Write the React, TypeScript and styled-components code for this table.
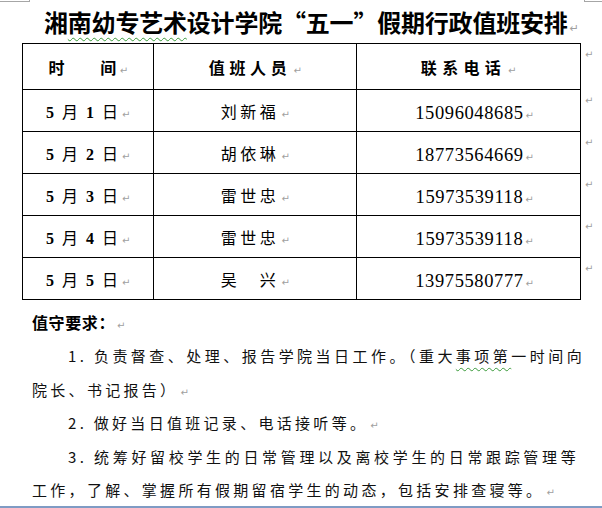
import React from 'react';
import styled, { createGlobalStyle } from 'styled-components';

const GlobalStyle = createGlobalStyle`
  html, body {
    margin: 0;
    padding: 0;
    background: #ffffff;
  }
  body {
    font-family: "Liberation Serif", "Noto Sans CJK SC", serif;
    color: #000;
  }
`;

const Page = styled.div`
  position: relative;
  width: 602px;
  height: 508px;
  box-sizing: border-box;
  border-bottom: 2px solid #7f9bc4;
  overflow: hidden;
  background: #fff;
`;

/* Word text-boundary corner marks */
const Corner = styled.span<{ $side: 'left' | 'right' }>`
  position: absolute;
  top: 0;
  ${p => (p.$side === 'left' ? 'left: 0; width: 29px; border-right: 1px solid #a6a6a6;' : 'right: 0; width: 17px; border-left: 1px solid #a6a6a6;')}
  height: 1px;
  border-bottom: 1px solid #a6a6a6;
`;

const Mark = styled.span<{ $size?: number }>`
  font-family: "DejaVu Sans", sans-serif;
  font-size: ${p => p.$size ?? 10}px;
  line-height: 1;
  font-weight: 400;
  color: #a0a0a0;
  letter-spacing: 0;
  margin-left: 2px;
`;

const Squiggle = styled.span`
  text-decoration-line: underline;
  text-decoration-style: wavy;
  text-decoration-color: #3a9a3a;
  text-decoration-thickness: 1px;
  text-underline-offset: 5px;
`;

const Title = styled.h1`
  margin: 7px 0 0;
  padding-left: 44px;
  height: 30px;
  line-height: 30px;
  font-family: "Noto Sans CJK SC", sans-serif;
  font-size: 24px;
  font-weight: 700;
  letter-spacing: -0.2px;
  white-space: nowrap;
`;

const Sheet = styled.table`
  margin: 6px 0 0 22px;
  border-collapse: collapse;
  table-layout: fixed;
`;

const Col = styled.col<{ $w: number }>`
  width: ${p => p.$w}px;
`;

const Row = styled.tr<{ $h: number }>`
  height: ${p => p.$h}px;
`;

const Cell = styled.td<{ $bold?: boolean; $spacing?: number; $phone?: boolean }>`
  border: 1px solid #000;
  padding: ${p => (p.$phone ? '6px 0 0 12px' : '0')};
  text-align: center;
  vertical-align: middle;
  white-space: nowrap;
  font-family: ${p => (p.$phone ? '"Liberation Serif", serif' : '"Liberation Serif", "Noto Sans CJK SC", serif')};
  font-size: ${p => (p.$phone ? 18.5 : 16)}px;
  font-weight: ${p => (p.$bold ? 700 : 400)};
  letter-spacing: ${p => p.$spacing ?? 0}px;
`;

const RowEnd = styled.td`
  border: none;
  padding: 3px 0 0 2px;
  vertical-align: top;
  width: 18px;
  line-height: 12px;
`;

const Num = styled.b`
  font-family: "Liberation Serif", serif;
  font-weight: 700;
`;

const Notes = styled.div`
  padding: 6px 0 0 32px;
  font-family: "Noto Sans CJK SC", sans-serif;
`;

const Heading = styled.p`
  margin: 0;
  line-height: 33.4px;
  font-size: 16px;
  font-weight: 700;
  letter-spacing: 0.6px;
`;

const Para = styled.p<{ $width: number }>`
  margin: 0;
  width: ${p => p.$width}px;
  line-height: 33.4px;
  font-size: 15px;
  letter-spacing: 3.3px;
  text-indent: 36px;
  text-align: justify;
  color: #111;
`;

const schedule = [
  { day: '1', name: '刘新福', phone: '15096048685' },
  { day: '2', name: '胡依琳', phone: '18773564669' },
  { day: '3', name: '雷世忠', phone: '15973539118' },
  { day: '4', name: '雷世忠', phone: '15973539118' },
  { day: '5', name: '吴　兴', phone: '13975580777' },
];

export default function App() {
  return (
    <>
      <GlobalStyle />
      <Page>
        <Corner $side="left" />
        <Corner $side="right" />

        <Title>
          湘<Squiggle>南幼专艺术</Squiggle>设计学院“五一”假期行政值班安排
          <Mark $size={11}>↵</Mark>
        </Title>

        <Sheet>
          <colgroup>
            <Col $w={132} />
            <Col $w={204} />
            <Col $w={225} />
            <Col $w={18} />
          </colgroup>
          <tbody>
            <Row $h={46}>
              <Cell $bold $spacing={1.3}>时　　间<Mark>↵</Mark></Cell>
              <Cell $bold $spacing={4.7}>值班人员<Mark>↵</Mark></Cell>
              <Cell $bold $spacing={5.3}>联系电话<Mark>↵</Mark></Cell>
              <RowEnd><Mark>↵</Mark></RowEnd>
            </Row>
            {schedule.map(r => (
              <Row $h={42} key={r.day}>
                <Cell $spacing={2}>
                  <Num>5</Num> 月 <Num>{r.day}</Num> 日<Mark>↵</Mark>
                </Cell>
                <Cell $spacing={3.5}>{r.name}<Mark>↵</Mark></Cell>
                <Cell $phone $spacing={0.6}>{r.phone}<Mark>↵</Mark></Cell>
                <RowEnd><Mark>↵</Mark></RowEnd>
              </Row>
            ))}
          </tbody>
        </Sheet>

        <Notes>
          <Heading>值守要求：<Mark>↵</Mark></Heading>
          <Para $width={553}>
            1. 负责督查、处理、报告学院当日工作。（重大<Squiggle>事项第</Squiggle>一时间向院长、书记报告）<Mark>↵</Mark>
          </Para>
          <Para $width={553}>2. 做好当日值班记录、电话接听等。<Mark>↵</Mark></Para>
          <Para $width={547}>
            3. 统筹好留校学生的日常管理以及离校学生的日常跟踪管理等工作，了解、掌握所有假期留宿学生的动态，包括安排查寝等。<Mark>↵</Mark>
          </Para>
        </Notes>
      </Page>
    </>
  );
}
